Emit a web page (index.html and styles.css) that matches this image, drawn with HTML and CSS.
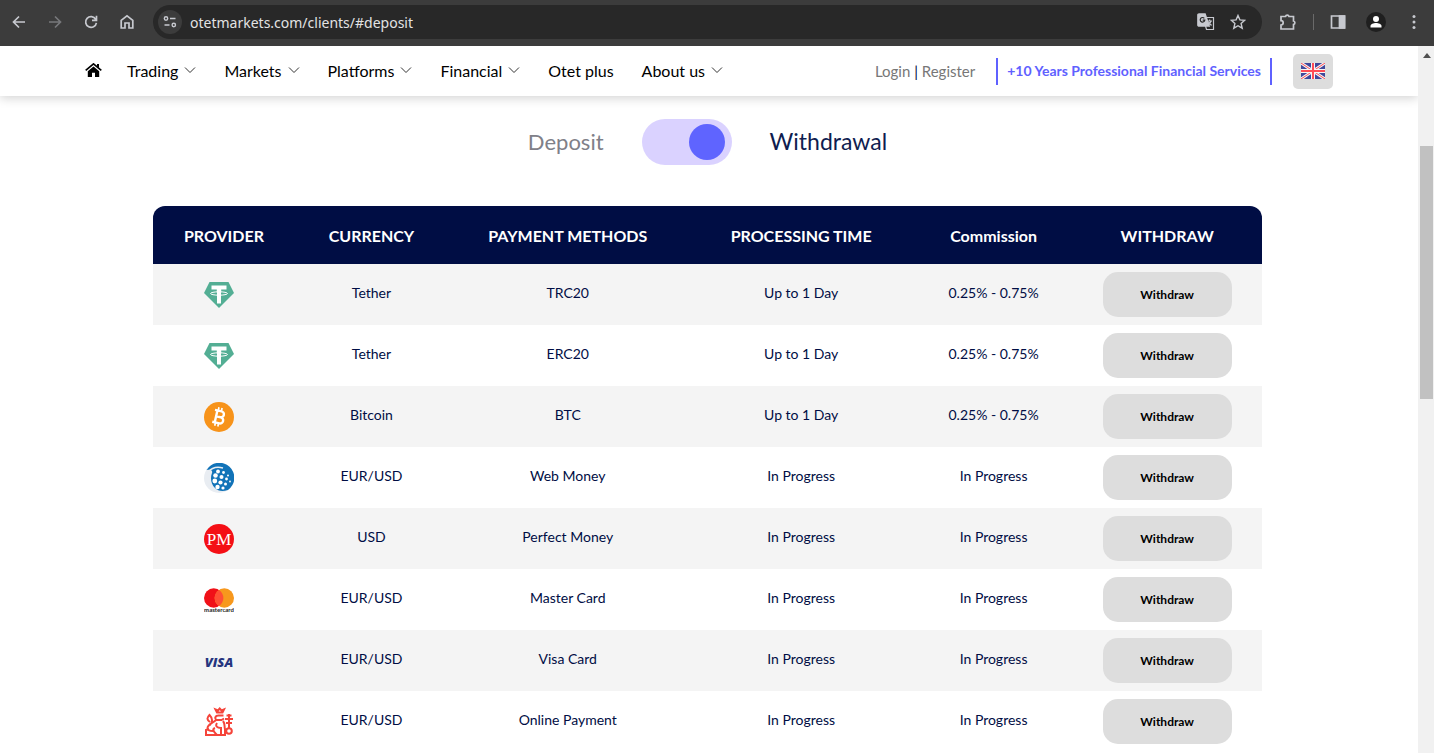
FILE: index.html
```html
<!DOCTYPE html>
<html lang="en">
<head>
<meta charset="utf-8">
<title>Otet Markets – Deposit and withdrawal</title>
<link rel="stylesheet" href="styles.css">
</head>
<body>
<svg class="symbols" aria-hidden="true">
  <symbol id="chevron" viewBox="0 0 12 12"><path d="M1 3.500 6 8.500 11 3.500" fill="none" stroke="currentColor" stroke-width="1"/></symbol>
  <symbol id="tether" viewBox="0 0 30 30">
    <path d="M5.500 2h19L30 13 15 28 0 13z" fill="#53ae94"/>
    <path d="M7.500 5.500h15v4h-5.300v3h-4.400v-3H7.500z" fill="#fff"/><path d="M13 12h4v11.500h-4z" fill="#fff"/>
    <ellipse cx="15" cy="13.500" rx="8.500" ry="1.700" fill="none" stroke="#fff" stroke-width="1"/>
  </symbol>
</svg>

<header class="browser">
  <button class="tool" aria-label="Back"><svg width="16" height="16" viewBox="0 0 16 16"><path d="M14 8H3M8 2.500 2.500 8 8 13.500"/></svg></button>
  <button class="tool dim" aria-label="Forward"><svg width="16" height="16" viewBox="0 0 16 16"><path d="M2 8h11M8 2.500 13.500 8 8 13.500"/></svg></button>
  <button class="tool" aria-label="Reload"><svg width="16" height="16" viewBox="0 0 16 16"><path d="M12.700 5.200A5.400 5.400 0 1 0 13.400 8.800M13.500 1.800v4.500H9"/></svg></button>
  <button class="tool" aria-label="Home"><svg width="16" height="16" viewBox="0 0 16 16"><path d="M2.200 14V6.300L8 1.800l5.800 4.500V14H10V9H6v5z"/></svg></button>
  <div class="omnibox">
    <button class="site-info" aria-label="Site information"><svg width="16" height="16" viewBox="0 0 16 16"><circle cx="4" cy="4.500" r="1.700"/><path d="M8 4.500h5.500M2.500 11h5"/><circle cx="11.800" cy="11" r="1.700"/></svg></button>
    <input class="url" type="text" aria-label="Address" value="otetmarkets.com/clients/#deposit">
    <button class="tool" aria-label="Translate"><svg width="18" height="18" viewBox="0 0 18 18"><path d="M2 1h6l4 12H2a1 1 0 0 1-1-1V2a1 1 0 0 1 1-1z" fill="#c7c9cf"/><path d="M9 4.500h7.500V16.500H9.500L8.500 13M10.500 8h4.500M12.700 6.500V8M14 8c-.5 2-1.500 3-3 4.200M11.500 9l3 3.500" stroke-width="1.200"/><path class="cut" d="M7.300 5.300A2.300 2.300 0 1 0 7.800 7.200H5.700"/></svg></button>
    <button class="tool" aria-label="Bookmark"><svg width="16" height="16" viewBox="0 0 16 16"><path d="m8 1.500 1.900 4.400 4.800.4-3.600 3.200 1.100 4.700L8 11.700l-4.200 2.500 1.100-4.700-3.600-3.200 4.800-.4z" stroke-width="1.400"/></svg></button>
  </div>
  <button class="tool" aria-label="Extensions"><svg width="18" height="18" viewBox="0 0 18 18"><path d="M2 3.500h4.500a1.800 1.800 0 0 1 3.500 0h4.500V8a1.800 1.800 0 0 1 0 3.500V16H2v-4a2.200 2.200 0 0 0 0-4.400z"/></svg></button>
  <span class="rule"></span>
  <button class="tool" aria-label="Side panel"><svg width="16" height="16" viewBox="0 0 16 16"><path d="M1.500 2h13v12h-13z"/><path d="M9.500 2h5v12h-5z" fill="#c7c9cf"/></svg></button>
  <button class="avatar" aria-label="Profile"><svg width="20" height="20" viewBox="0 0 20 20"><circle cx="10" cy="7" r="3"/><path d="M4.500 15.500v-1.500c0-2 3-3 5.500-3s5.500 1 5.500 3v1.500z"/></svg></button>
  <button class="tool" aria-label="Menu"><svg width="16" height="16" viewBox="0 0 16 16"><g fill="#c7c9cf" stroke="none"><circle cx="8" cy="2.500" r="1.500"/><circle cx="8" cy="8" r="1.500"/><circle cx="8" cy="13.500" r="1.500"/></g></svg></button>
</header>

<div class="viewport">
  <div class="page">
    <nav class="site-nav">
      <div class="menu">
        <a class="home" href="#home" aria-label="Home"><svg width="17" height="14" viewBox="0 0 17 14"><path d="M.7 7.300 8.500.9l7.800 6.400" fill="none" stroke="#000" stroke-width="1.700"/><path d="M12 1h2v4l-2-1.500zM8.500 3.600 14.200 8.200V14H10V9.800H7V14H2.800V8.200z"/></svg></a>
        <a href="#trading">Trading <svg class="chevron"><use href="#chevron"/></svg></a>
        <a href="#markets">Markets <svg class="chevron"><use href="#chevron"/></svg></a>
        <a href="#platforms">Platforms <svg class="chevron"><use href="#chevron"/></svg></a>
        <a href="#financial">Financial <svg class="chevron"><use href="#chevron"/></svg></a>
        <a href="#plus">Otet plus</a>
        <a href="#about">About us <svg class="chevron"><use href="#chevron"/></svg></a>
      </div>
      <div class="account">
        <span class="login"><a href="#login">Login</a> | <a href="#register">Register</a></span>
        <strong class="slogan">+10 Years Professional Financial Services</strong>
        <button class="language" aria-label="English"><svg width="24" height="16" viewBox="0 0 24 16"><path d="M0 0h24v16H0z" fill="#41479b"/><path d="m0 0 24 16M24 0 0 16" stroke="#f5f5f5" stroke-width="3"/><path d="m0 0 24 16M24 0 0 16" stroke="#ff4b55" stroke-width="1"/><path d="M12 0v16M0 8h24" stroke="#f5f5f5" stroke-width="4"/><path d="M12 0v16M0 8h24" stroke="#ff4b55" stroke-width="2"/></svg></button>
      </div>
    </nav>

    <main>
      <div class="mode">
        <label class="deposit" for="mode">Deposit</label>
        <input id="mode" class="switch" type="checkbox" role="switch" checked>
        <label class="withdrawal" for="mode">Withdrawal</label>
      </div>

      <table class="methods">
        <colgroup><col class="c-provider"><col class="c-currency"><col class="c-method"><col class="c-time"><col class="c-commission"><col class="c-action"></colgroup>
        <thead>
          <tr><th>PROVIDER</th><th>CURRENCY</th><th>PAYMENT METHODS</th><th>PROCESSING TIME</th><th>Commission</th><th>WITHDRAW</th></tr>
        </thead>
        <tbody>
          <tr><td><svg class="logo"><use href="#tether"/></svg></td><td>Tether</td><td>TRC20</td><td>Up to 1 Day</td><td>0.25% - 0.75%</td><td><button class="withdraw">Withdraw</button></td></tr>
          <tr><td><svg class="logo"><use href="#tether"/></svg></td><td>Tether</td><td>ERC20</td><td>Up to 1 Day</td><td>0.25% - 0.75%</td><td><button class="withdraw">Withdraw</button></td></tr>
          <tr><td><svg class="logo" viewBox="0 0 30 30"><circle cx="15" cy="15" r="15" fill="#f7931a"/><g transform="rotate(13 15 15)" fill="none" stroke="#fff"><path d="M9.500 9h6.800a2.900 2.900 0 0 1 0 5.900H12h4.800a3.100 3.100 0 0 1 0 6.200H9.500M12 9v12" stroke-width="2.400"/><path d="M12.800 5.500V9M16 5.500V9M12.800 21v3.500M16 21v3.500" stroke-width="1.700"/></g></svg></td><td>Bitcoin</td><td>BTC</td><td>Up to 1 Day</td><td>0.25% - 0.75%</td><td><button class="withdraw">Withdraw</button></td></tr>
          <tr><td><svg class="logo" viewBox="0 0 30 30"><circle cx="15" cy="15" r="15" fill="#e9edf2"/><path d="M2.500 7A15 15 0 1 1 24 27C18 29 14 28 11 25 7 21 6 15 8 10 9 7 6 6 2.500 7z" fill="#1173b8"/><path d="M4 9C8 4.500 14 3.500 19 5" fill="none" stroke="#e9edf2" stroke-width="1.500"/><g fill="#fff"><circle cx="14" cy="8.500" r="1.900"/><circle cx="19.500" cy="9.500" r="1.400"/><circle cx="24" cy="12.500" r="1"/><circle cx="11.500" cy="12.500" r="2.300"/><circle cx="17.500" cy="14" r="2"/><circle cx="22.500" cy="16" r="1.400"/><circle cx="26" cy="18.500" r=".9"/><circle cx="10.800" cy="18" r="2.400"/><circle cx="16.500" cy="19.500" r="2.100"/><circle cx="21.500" cy="21" r="1.500"/><circle cx="13.500" cy="24" r="2.200"/><circle cx="19" cy="25" r="1.600"/></g></svg></td><td>EUR/USD</td><td>Web Money</td><td>In Progress</td><td>In Progress</td><td><button class="withdraw">Withdraw</button></td></tr>
          <tr><td><svg class="logo" viewBox="0 0 30 30"><circle cx="15" cy="15" r="15" fill="#f40f15"/><text class="pm" x="15" y="21" text-anchor="middle">PM</text></svg></td><td>USD</td><td>Perfect Money</td><td>In Progress</td><td>In Progress</td><td><button class="withdraw">Withdraw</button></td></tr>
          <tr><td><svg class="logo" viewBox="0 0 30 30"><circle cx="9.700" cy="13" r="9.700" fill="#f01018"/><circle cx="20.300" cy="13" r="9.700" fill="#f7981d"/><path d="M15 4.900a9.700 9.700 0 0 1 0 16.200 9.700 9.700 0 0 1 0-16.200z" fill="#ff4f35"/><text class="mc" x="15" y="27" text-anchor="middle">mastercard</text></svg></td><td>EUR/USD</td><td>Master Card</td><td>In Progress</td><td>In Progress</td><td><button class="withdraw">Withdraw</button></td></tr>
          <tr><td><svg class="logo" viewBox="0 0 30 30"><text class="visa" x="15" y="21" text-anchor="middle">VISA</text></svg></td><td>EUR/USD</td><td>Visa Card</td><td>In Progress</td><td>In Progress</td><td><button class="withdraw">Withdraw</button></td></tr>
          <tr><td><svg class="logo" viewBox="0 0 30 30"><g fill="none" stroke="#f5443a" stroke-width="2"><path d="M11.500 2.500 13 5.500h5.500L20 2.500l-2.500 1L15.700 1.500 14 3.500zM19.500 8.500h-5c-3.500 0-4 3-2 4.500h5l2.500-1.500M12 13c-3 3-8 4-8.500 8 0 2 2 3 5.500 3M13 16c-2 3 0 5 4 5v7h-4M19 14c2.500 3 1 6 2 8v6h-4M11 21c-3 1-2 3 2 7H2v-5l3-1M6 18c3-3 2.500-7-.5-10-3 3-2.500 5 .5 7M25 7v14M21 12h8M22 16h6M22.500 8.500h5"/><circle cx="25" cy="24" r="2.800"/></g></svg></td><td>EUR/USD</td><td>Online Payment</td><td>In Progress</td><td>In Progress</td><td><button class="withdraw">Withdraw</button></td></tr>
        </tbody>
      </table>
    </main>
  </div>
  <div class="scrollbar" aria-hidden="true"><svg width="8" height="5" viewBox="0 0 8 5"><path d="M4 0l4 5H0z" fill="#505050"/></svg><div class="thumb"></div></div>
</div>
</body>
</html>
```

FILE: styles.css
```css
* { box-sizing: border-box; }
body {
  margin: 0;
  height: 100vh;
  display: flex;
  flex-direction: column;
  overflow: hidden;
  background: #fff;
  color: #000d44;
  font-family: Lato, "Open Sans", sans-serif;
  font-size: 14px;
}
button { border: 0; padding: 0; background: none; font: inherit; }
a { color: inherit; text-decoration: none; }
svg { display: block; }
.symbols { display: none; }

/* browser bar */
.browser {
  flex: none;
  height: 46px;
  padding: 0 12px 2px 11px;
  display: flex;
  align-items: center;
  gap: 20px;
  background: #3c3c3c;
}
.tool { flex: none; }
.tool svg, .site-info svg { fill: none; stroke: #c7c9cf; stroke-width: 1.7; }
.tool.dim svg { stroke: #77787b; }
.tool .cut { stroke: #282828; stroke-width: 1.2; }
.omnibox {
  flex: 1;
  height: 34px;
  margin: 0 -3px 0 -2px;
  padding: 0 16px 0 5px;
  display: flex;
  align-items: center;
  gap: 15px;
  border-radius: 17px;
  background: #282828;
}
.site-info {
  width: 24px;
  height: 24px;
  display: grid;
  place-items: center;
  border-radius: 50%;
  background: #3c3c3c;
}
.site-info svg { stroke-width: 1.4; }
.url {
  flex: 1;
  margin-left: -7px;
  border: 0;
  padding: 0;
  outline: 0;
  background: none;
  color: #e3e3e3;
  font: 14px "Noto Sans", sans-serif;
}
.rule { width: 1px; height: 16px; margin: 0 -4px; background: #6a6a6a; }
.avatar { border-radius: 50%; background: #1f1f1f; }
.avatar svg { fill: #fff; }

/* page */
.viewport { flex: 1; min-height: 0; display: flex; }
.page { flex: 1; min-width: 0; overflow: hidden; }
.site-nav {
  height: 50px;
  padding: 0 85px;
  display: flex;
  align-items: center;
  justify-content: space-between;
  box-shadow: 0 2px 10px rgba(0, 0, 0, 0.18);
}
.menu {
  padding-bottom: 2px;
  display: flex;
  align-items: center;
  gap: 28px;
  color: #000;
  font-size: 16px;
}
.menu a { display: flex; align-items: center; gap: 6px; }
.menu .home { margin-right: -3px; }
.chevron { width: 12px; height: 12px; color: #333; }
.account { display: flex; align-items: center; gap: 21px; }
.login { font-size: 15px; }
.login a { color: #777; }
.slogan {
  padding: 3px 9px 5px;
  border: solid #5f61ff;
  border-width: 0 2px;
  color: #5f61ff;
  font-size: 14px;
  line-height: 19px;
}
.language {
  width: 40px;
  height: 35px;
  display: grid;
  place-items: center;
  border-radius: 5px;
  background: #ddd;
}

.mode {
  padding: 23px 3px 41px 0;
  display: flex;
  align-items: center;
  justify-content: center;
  gap: 38px;
}
.mode label { padding-bottom: 2px; }
.deposit { color: #808088; font-size: 22px; }
.withdrawal { color: #0f1d50; font-size: 23px; }
.switch {
  appearance: none;
  width: 90px;
  height: 46px;
  margin: 0;
  padding: 5px 7px;
  display: flex;
  border-radius: 23px;
  background: #dad2ff;
}
.switch::before {
  content: "";
  width: 36px;
  height: 36px;
  border-radius: 50%;
  background: #5f64ff;
}
.switch:checked { justify-content: flex-end; }

.methods {
  width: calc(100% - 309px);
  margin: 0 156px 0 153px;
  table-layout: fixed;
  border-collapse: separate;
  border-spacing: 0;
  text-align: center;
}
.c-provider { width: 12.8%; }
.c-currency { width: 13.8%; }
.c-method { width: 21.6%; }
.c-time { width: 20.5%; }
.c-commission { width: 14.2%; }
.c-action { width: 17.1%; }
.methods th {
  height: 58px;
  padding: 0;
  background: #000d44;
  color: #fff;
  font-size: 16px;
}
.methods th:first-child { border-top-left-radius: 12px; }
.methods th:last-child { border-top-right-radius: 12px; }
.methods td { height: 61px; padding: 0 0 4px; }
.methods td:first-child { padding: 0 9px 0 0; }
.methods td:last-child { padding: 0; }
.methods tbody tr:nth-child(odd) { background: #f4f4f4; }
.logo { width: 30px; height: 30px; margin: 0 auto; }
.pm { fill: #fff; font: 17px "Liberation Serif", serif; }
.mc { fill: #222; font: bold 6px Lato, sans-serif; }
.visa { fill: #26357f; font: italic 900 13px "Open Sans", sans-serif; }
.withdraw {
  width: 129px;
  height: 45px;
  border-radius: 15px;
  background: #ddd;
  color: #000;
  font-size: 12px;
  font-weight: bold;
}

.scrollbar {
  flex: none;
  width: 16px;
  padding: 7px 1px 0 2px;
  display: flex;
  flex-direction: column;
  align-items: center;
  gap: 88px;
  background: #f1f1f1;
}
.thumb { width: 100%; height: 253px; background: #c1c1c1; }
```
